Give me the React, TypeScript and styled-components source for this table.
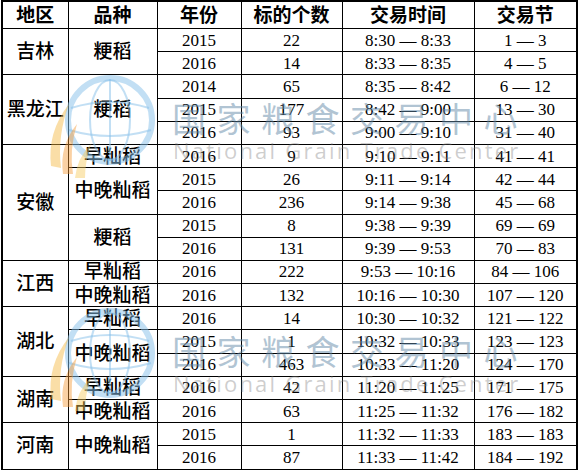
import React from "react";
import styled, { createGlobalStyle } from "styled-components";

const GlobalStyle = createGlobalStyle`
  html, body {
    margin: 0;
    padding: 0;
    background: #ffffff;
  }
`;

const Frame = styled.div`
  position: relative;
  width: 581px;
  height: 470px;
  overflow: hidden;
  background: #ffffff;
`;

const Table = styled.table`
  margin-left: 1px;
  width: 577px;
  border-collapse: collapse;
  table-layout: fixed;
  border: 2px solid #000;
  font-family: "Liberation Serif", "Noto Sans CJK SC", serif;
  color: #000;
`;

const HeadCell = styled.th`
  height: 26px;
  padding: 0;
  border: 1px solid #000;
  font-family: "Liberation Serif", "Noto Sans CJK SC", serif;
  font-size: 19px;
  font-weight: 700;
  text-align: center;
  vertical-align: middle;
  line-height: 1;
`;

const Cell = styled.td<{ $cjk?: boolean }>`
  height: 22.2px;
  padding: 0;
  border: 1px solid #000;
  font-size: ${(p) => (p.$cjk ? "19px" : "17px")};
  font-weight: ${(p) => (p.$cjk ? 500 : 400)};
  text-align: center;
  vertical-align: middle;
  line-height: 1;
  white-space: nowrap;
`;

const Watermark = styled.div<{ $top: number }>`
  position: absolute;
  left: 45px;
  top: ${(p) => p.$top}px;
  display: flex;
  align-items: flex-start;
  gap: 9px;
  pointer-events: none;
`;

const MarkText = styled.div`
  display: flex;
  flex-direction: column;
  padding-top: 29px;
`;

const MarkCn = styled.div`
  font-family: "Noto Sans CJK SC", sans-serif;
  font-size: 34px;
  line-height: 38px;
  letter-spacing: 10.5px;
  color: rgba(100, 138, 168, 0.5);
`;

const MarkEn = styled.div`
  font-family: "Open Sans", "DejaVu Sans", sans-serif;
  font-size: 22px;
  line-height: 26px;
  letter-spacing: 2.2px;
  color: rgba(125, 125, 125, 0.38);
  margin-left: 1px;
`;

const Logo = () => (
  <svg width="118" height="120" viewBox="0 0 118 120">
    <g fill="none" stroke="#86c0ea" strokeOpacity="0.5">
      <circle cx="65" cy="50" r="42" strokeWidth="6" />
      <ellipse cx="65" cy="50" rx="20" ry="40" strokeWidth="2" />
      <path d="M26 38 Q65 26 104 38" strokeWidth="2" />
      <path d="M24 60 Q65 72 106 60" strokeWidth="2" />
      <path d="M65 9 L65 91" strokeWidth="2" />
    </g>
    <g fillOpacity="0.45">
      <path d="M6 96 Q2 62 24 34 Q12 66 16 98 Z" fill="#f4b53c" />
      <path d="M18 104 Q14 76 32 54 Q24 80 28 104 Z" fill="#f39a35" />
      <path d="M30 108 Q32 88 46 74 Q40 92 40 108 Z" fill="#f7c95a" />
    </g>
  </svg>
);

const Mark = ({ top }: { top: number }) => (
  <Watermark $top={top}>
    <Logo />
    <MarkText>
      <MarkCn>国家粮食交易中心</MarkCn>
      <MarkEn>National Grain Trade Center</MarkEn>
    </MarkText>
  </Watermark>
);

type Line = { year: string; count: string; time: string; lots: string };
type Kind = { name: string; lines: Line[] };
type Region = { name: string; kinds: Kind[] };

const l = (year: string, count: string, time: string, lots: string): Line => ({
  year,
  count,
  time,
  lots,
});

const regions: Region[] = [
  {
    name: "吉林",
    kinds: [
      {
        name: "粳稻",
        lines: [l("2015", "22", "8:30 — 8:33", "1 — 3"), l("2016", "14", "8:33 — 8:35", "4 — 5")],
      },
    ],
  },
  {
    name: "黑龙江",
    kinds: [
      {
        name: "粳稻",
        lines: [
          l("2014", "65", "8:35 — 8:42", "6 — 12"),
          l("2015", "177", "8:42 — 9:00", "13 — 30"),
          l("2016", "93", "9:00 — 9:10", "31 — 40"),
        ],
      },
    ],
  },
  {
    name: "安徽",
    kinds: [
      { name: "早籼稻", lines: [l("2016", "9", "9:10 — 9:11", "41 — 41")] },
      {
        name: "中晚籼稻",
        lines: [l("2015", "26", "9:11 — 9:14", "42 — 44"), l("2016", "236", "9:14 — 9:38", "45 — 68")],
      },
      {
        name: "粳稻",
        lines: [l("2015", "8", "9:38 — 9:39", "69 — 69"), l("2016", "131", "9:39 — 9:53", "70 — 83")],
      },
    ],
  },
  {
    name: "江西",
    kinds: [
      { name: "早籼稻", lines: [l("2016", "222", "9:53 — 10:16", "84 — 106")] },
      { name: "中晚籼稻", lines: [l("2016", "132", "10:16 — 10:30", "107 — 120")] },
    ],
  },
  {
    name: "湖北",
    kinds: [
      { name: "早籼稻", lines: [l("2016", "14", "10:30 — 10:32", "121 — 122")] },
      {
        name: "中晚籼稻",
        lines: [
          l("2015", "1", "10:32 — 10:33", "123 — 123"),
          l("2016", "463", "10:33 — 11:20", "124 — 170"),
        ],
      },
    ],
  },
  {
    name: "湖南",
    kinds: [
      { name: "早籼稻", lines: [l("2016", "42", "11:20 — 11:25", "171 — 175")] },
      { name: "中晚籼稻", lines: [l("2016", "63", "11:25 — 11:32", "176 — 182")] },
    ],
  },
  {
    name: "河南",
    kinds: [
      {
        name: "中晚籼稻",
        lines: [
          l("2015", "1", "11:32 — 11:33", "183 — 183"),
          l("2016", "87", "11:33 — 11:42", "184 — 192"),
        ],
      },
    ],
  },
];

const widths = [66, 89, 84, 101, 132, 103];
const headers = ["地区", "品种", "年份", "标的个数", "交易时间", "交易节"];

export default function App() {
  const rows: React.ReactNode[] = [];
  regions.forEach((r) => {
    const regionSpan = r.kinds.reduce((n, k) => n + k.lines.length, 0);
    r.kinds.forEach((k, ki) => {
      k.lines.forEach((ln, li) => {
        rows.push(
          <tr key={`${r.name}-${ki}-${li}`}>
            {ki === 0 && li === 0 && (
              <Cell $cjk rowSpan={regionSpan}>
                {r.name}
              </Cell>
            )}
            {li === 0 && (
              <Cell $cjk rowSpan={k.lines.length}>
                {k.name}
              </Cell>
            )}
            <Cell>{ln.year}</Cell>
            <Cell>{ln.count}</Cell>
            <Cell>{ln.time}</Cell>
            <Cell>{ln.lots}</Cell>
          </tr>
        );
      });
    });
  });

  return (
    <Frame>
      <GlobalStyle />
      <Table>
        <colgroup>
          {widths.map((w, i) => (
            <col key={i} style={{ width: w }} />
          ))}
        </colgroup>
        <thead>
          <tr>
            {headers.map((h) => (
              <HeadCell key={h}>{h}</HeadCell>
            ))}
          </tr>
        </thead>
        <tbody>{rows}</tbody>
      </Table>
      <Mark top={70} />
      <Mark top={303} />
    </Frame>
  );
}
